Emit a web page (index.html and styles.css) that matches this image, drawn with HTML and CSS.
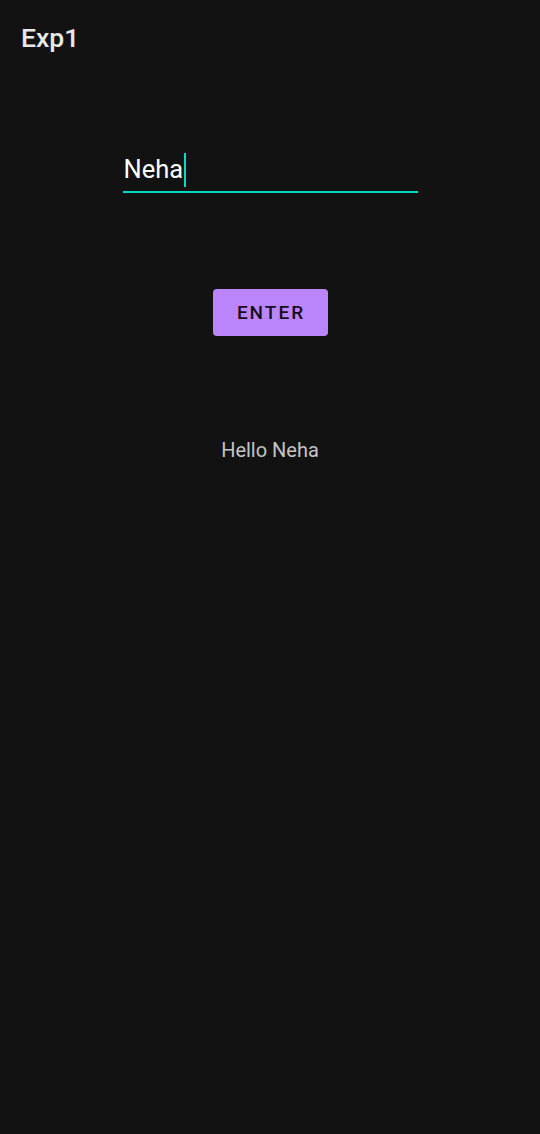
FILE: index.html
```html
<!DOCTYPE html>
<html>
<head>
<meta charset="utf-8">
<link rel="stylesheet" href="styles.css">
</head>
<body>
<div class="app">
  <header class="toolbar"><h1 class="title">Exp1</h1></header>
  <main class="content">
    <div class="field">
      <span class="field-text">Neha</span><span class="cursor"></span>
    </div>
    <button class="btn">ENTER</button>
    <p class="greeting">Hello Neha</p>
  </main>
</div>
</body>
</html>
```
FILE: styles.css
```css
html, body {
  margin: 0;
  padding: 0;
  background: #121212;
}
.app {
  width: 540px;
  height: 1134px;
  background: #121212;
  font-family: Roboto, "Noto Sans", sans-serif;
  display: flex;
  flex-direction: column;
}
.toolbar {
  height: 78px;
  padding: 0 21px;
  display: flex;
  align-items: flex-start;
}
.title {
  margin: 22px 0 0;
  font-size: 26.5px;
  font-weight: 500;
  color: #e8e8e8;
  line-height: 32px;
}
.content {
  display: flex;
  flex-direction: column;
  align-items: center;
}
.field {
  width: 295px;
  height: 40px;
  margin-top: 69px;
  border-bottom: 2px solid #03dac5;
  display: flex;
  align-items: flex-end;
  padding-bottom: 4px;
  box-sizing: content-box;
}
.field-text {
  font-size: 25.5px;
  color: #ffffff;
  line-height: 30px;
  padding-left: 1px;
  margin-bottom: 3px;
}
.cursor {
  width: 2px;
  height: 34px;
  background: #03dac5;
  margin-left: 1px;
}
.btn {
  margin-top: 96px;
  width: 115px;
  height: 47px;
  border: none;
  border-radius: 4px;
  background: #bb86fc;
  color: #160c22;
  font-family: Roboto, "Noto Sans", sans-serif;
  font-size: 19px;
  font-weight: 500;
  letter-spacing: 2px;
  padding: 0 0 0 2px;
}
.greeting {
  margin: 102px 0 0;
  font-size: 20px;
  color: #c4c4c4;
  line-height: 24px;
}
```
